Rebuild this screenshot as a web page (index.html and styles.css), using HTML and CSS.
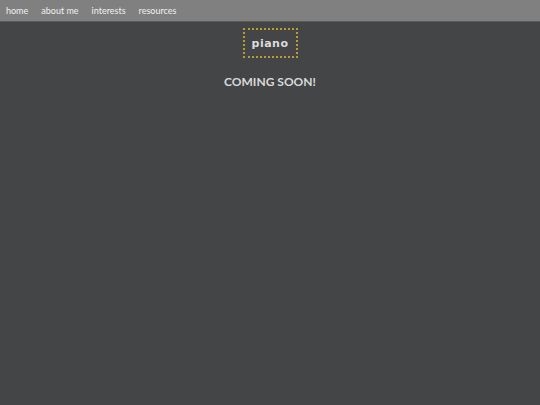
FILE: index.html
```html
<!DOCTYPE html>
<html>
<head>
<meta charset="utf-8">
<link rel="stylesheet" href="styles.css">
</head>
<body>
<nav class="topnav">
  <a class="navlink" href="#">home</a>
  <a class="navlink" href="#">about me</a>
  <a class="navlink" href="#">interests</a>
  <a class="navlink" href="#">resources</a>
</nav>
<main class="content">
  <div class="titlebox">piano</div>
  <h1 class="soon">COMING SOON!</h1>
</main>
</body>
</html>
```

FILE: styles.css
```css
html, body {
  margin: 0;
  padding: 0;
  background: #444547;
  height: 100%;
}
body {
  font-family: "Lato", "Open Sans", sans-serif;
}
.topnav {
  height: 21px;
  background: #808080;
  border-bottom: 1px solid #5a5a5a;
  display: flex;
  align-items: center;
  padding-left: 6px;
  gap: 13px;
}
.navlink {
  color: #f0f0f0;
  text-decoration: none;
  font-size: 9px;
  line-height: 21px;
}
.content {
  display: flex;
  flex-direction: column;
  align-items: center;
  padding-top: 6px;
}
.titlebox {
  width: 51px;
  height: 26px;
  border: 2px dotted #b99c30;
  display: flex;
  align-items: center;
  justify-content: center;
  color: #dcdcdc;
  font-family: "DejaVu Sans", sans-serif;
  font-size: 11px;
  font-weight: bold;
  letter-spacing: 0.5px;
}
.soon {
  margin: 16px 0 0;
  color: #d9d9d9;
  font-size: 12px;
  font-weight: 700;
  font-family: "Lato", "Open Sans", sans-serif;
}
```
